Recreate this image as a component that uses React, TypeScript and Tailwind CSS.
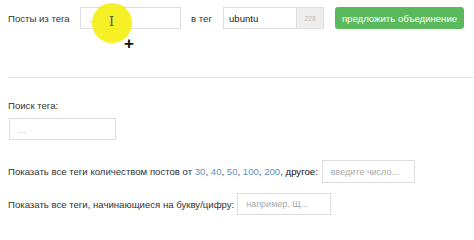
import React from 'react';

export default function App() {
  const counts = ['30', '40', '50', '100', '200'];

  return (
    <div className="relative w-[474px] h-[240px] bg-white text-[9.6px] leading-[11px] text-[#333] overflow-hidden whitespace-nowrap" style={{ fontFamily: '"Liberation Sans", Arial, sans-serif' }}>
      <div className="flex items-center pl-2 pt-[7px]">
        <span className="w-[72px] shrink-0">Посты из тега</span>
        <input className="shrink-0 w-[101px] h-[22px] border border-[#ddd] px-2 text-[9.6px] outline-none" placeholder="..." />
        <span className="shrink-0 w-[42px] pl-[10px]">в тег</span>
        <div className="shrink-0 flex h-[22px] border border-[#ddd]">
          <input className="w-[72px] px-[5px] text-[9.6px] text-[#222] outline-none" defaultValue="ubuntu" />
          <span className="w-[27px] bg-[#eee] border-l border-[#ddd] text-[#bbb] text-[7px] flex items-center justify-center">228</span>
        </div>
        <button className="shrink-0 ml-[11px] w-[129px] h-[22px] rounded-[3px] bg-[#5cb85c] text-white text-[9.6px]">предложить объединение</button>
      </div>

      <div className="mt-[48px] ml-2 border-t border-[#e5e5e5]" />

      <div className="pl-2 mt-[22px]">
        <div>Поиск тега:</div>
        <input className="mt-[7px] ml-px w-[107px] h-[22px] border border-[#ddd] px-2 text-[9.6px] placeholder:text-[#bbb] outline-none" placeholder="..." />
      </div>

      <div className="flex items-center pl-2 mt-[20px]">
        <span>
          Показать все теги количеством постов от{' '}
          {counts.map((c) => (
            <span key={c}>
              <span className="text-[#5b93b8]">{c}</span>,{' '}
            </span>
          ))}
          <span className="text-[#111]">другое</span>:
        </span>
        <input className="shrink-0 ml-[4px] w-[93px] h-[23px] border border-[#ddd] px-2 text-[9px] placeholder:text-[#aaa] outline-none" placeholder="введите число..." />
      </div>

      <div className="flex items-center pl-2 mt-[10px]">
        <span>Показать все теги, начинающиеся на букву/цифру:</span>
        <input className="shrink-0 ml-[3px] w-[94px] h-[22px] border border-[#ddd] px-2 text-[9px] placeholder:text-[#aaa] outline-none" placeholder="например, Щ..." />
      </div>

      <div className="absolute left-[92px] top-[3px] w-[40px] h-[40px] rounded-full bg-[#f5ee10] opacity-90 pointer-events-none" />
      <div className="absolute left-[109px] top-[15px] text-[13px] leading-none text-[#555] pointer-events-none" style={{ fontFamily: '"DejaVu Serif", serif' }}>I</div>
      <div className="absolute left-[124px] top-[35px] text-[17px] font-bold text-[#111] pointer-events-none leading-none">+</div>
    </div>
  );
}
